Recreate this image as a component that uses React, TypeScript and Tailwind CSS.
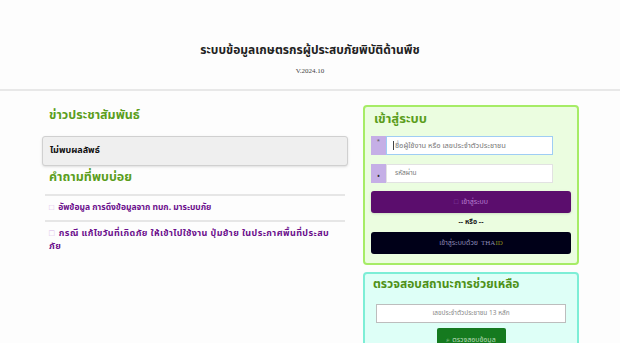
import React from 'react';

const App: React.FC = () => {
  return (
    <div className="min-h-[343px] w-[620px] bg-[#fdfdfd] font-['Noto_Sans_Thai','Noto_Sans',sans-serif] overflow-hidden">
      {/* --- HEADER --- */}
      <div className="flex flex-col items-center pt-[40px] h-[91px] border-b-2 border-[#e8e8e8]">
        <h1 className="text-[12px] font-bold text-[#222] leading-[20px]">ระบบข้อมูลเกษตรกรผู้ประสบภัยพิบัติด้านพืช</h1>
        <span className="mt-[6px] text-[7px] text-[#444] font-['Liberation_Serif',serif]">V.2024.10</span>
      </div>

      <div className="flex pt-[14px]">
        {/* --- LEFT COLUMN --- */}
        <div className="ml-[42px] w-[306px] flex flex-col">
          <h2 className="pl-[7px] text-[12.5px] font-bold text-[#5b9e1c] leading-[20px] mt-[1px]">ข่าวประชาสัมพันธ์</h2>
          <div className="mt-[10px] h-[30px] flex items-center px-[7px] bg-[#efefef] border border-[#d0d0d0] rounded-[3px] shadow-sm">
            <span className="text-[9px] font-bold text-[#111]">ไม่พบผลลัพธ์</span>
          </div>
          <h2 className="pl-[7px] mt-[2px] text-[12.5px] font-bold text-[#5b9e1c] leading-[20px]">คำถามที่พบบ่อย</h2>
          <div className="ml-[3px] mr-[3px] mt-[6px] border-t-2 border-[#e6e6e6]">
            <div className="px-[4px] py-[5px] text-[8.5px] font-bold text-[#6b0f8c] leading-[14px] border-b-2 border-[#e6e6e6]">
              <span className="text-[#d7b5e8] mr-[4px]">□</span>อัพข้อมูล การดึงข้อมูลจาก ทบก. มาระบบภัย
            </div>
            <div className="pl-[4px] pr-[4px] pt-[5px] text-[9px] font-bold text-[#6b0f8c] leading-[13px] tracking-[0.4px]">
              <span className="text-[#d7b5e8] mr-[4px]">□</span>กรณี แก้ไขวันที่เกิดภัย ให้เข้าไปใช้งาน ปุ่มย้าย ในประกาศพื้นที่ประสบ<br />ภัย
            </div>
          </div>
        </div>

        {/* --- RIGHT COLUMN --- */}
        <div className="ml-[15px] w-[216px] flex flex-col">
          <div className="bg-[#ebfde0] border-2 border-[#a6ec66] rounded-[4px] px-[6px] pt-[2px] pb-[9px]">
            <h2 className="pl-[3px] text-[13px] font-bold text-[#5b9e1c] leading-[20px]">เข้าสู่ระบบ</h2>
            <div className="mt-[7px] flex h-[19px] w-[182px]">
              <div className="w-[15px] bg-[#c5afe6] flex items-start justify-center text-[6px] text-[#555] pt-[1px]">*</div>
              <div className="flex-1 bg-white border border-[#9fcdf4] flex items-center pl-[6px] text-[7.5px] text-[#777]">
                <span className="w-px h-[9px] bg-[#444] mr-[1px]" />ชื่อผู้ใช้งาน หรือ เลขประจำตัวประชาชน
              </div>
            </div>
            <div className="mt-[9px] flex h-[19px] w-[182px]">
              <div className="w-[15px] bg-[#c5afe6] flex items-end justify-center text-[8px] text-[#333] leading-[12px]">•</div>
              <div className="flex-1 bg-white border border-[#e2e2e2] flex items-center pl-[8px] text-[6.5px] text-[#777]">
                รหัสผ่าน
              </div>
            </div>
            <button className="mt-[8px] w-full h-[22px] bg-[#5b0d6d] rounded-[3px] shadow text-[7px] text-[#b77fd0] flex items-center justify-center">
              <span className="text-[#8a4fb0] mr-[3px]">□</span>เข้าสู่ระบบ
            </button>
            <div className="mt-[3px] text-center text-[7px] font-bold text-[#222] leading-[12px]">-- หรือ --</div>
            <button className="mt-[4px] w-full h-[22px] bg-[#000018] rounded-[3px] text-[7px] text-[#8b88b5] flex items-center justify-center">
              เข้าสู่ระบบด้วย <span className="ml-[3px] font-['Liberation_Serif',serif]">THA<span className="text-[#8a8a1a]">ID</span></span>
            </button>
          </div>

          <div className="mt-[7px] bg-[#defff7] border-2 border-[#7deed6] rounded-[4px] px-[8px] pb-[8px]">
            <h2 className="text-[12px] font-bold text-[#4f9117] leading-[18px] pt-[1px]">ตรวจสอบสถานะการช่วยเหลือ</h2>
            <div className="mt-[11px] mx-[3px] h-[19px] bg-white border border-[#bdbdbd] flex items-center justify-center text-[6.5px] text-[#888]">
              เลขประจำตัวประชาชน 13 หลัก
            </div>
            <div className="flex justify-center mt-[5px]">
              <button className="w-[69px] h-[20px] bg-[#157a1f] rounded-[2px] text-[7px] text-[#b9dcb9] leading-[10px] pt-[4px]">
                ⌕ ตรวจสอบข้อมูล
              </button>
            </div>
          </div>
        </div>
      </div>
    </div>
  );
};

export default App;
